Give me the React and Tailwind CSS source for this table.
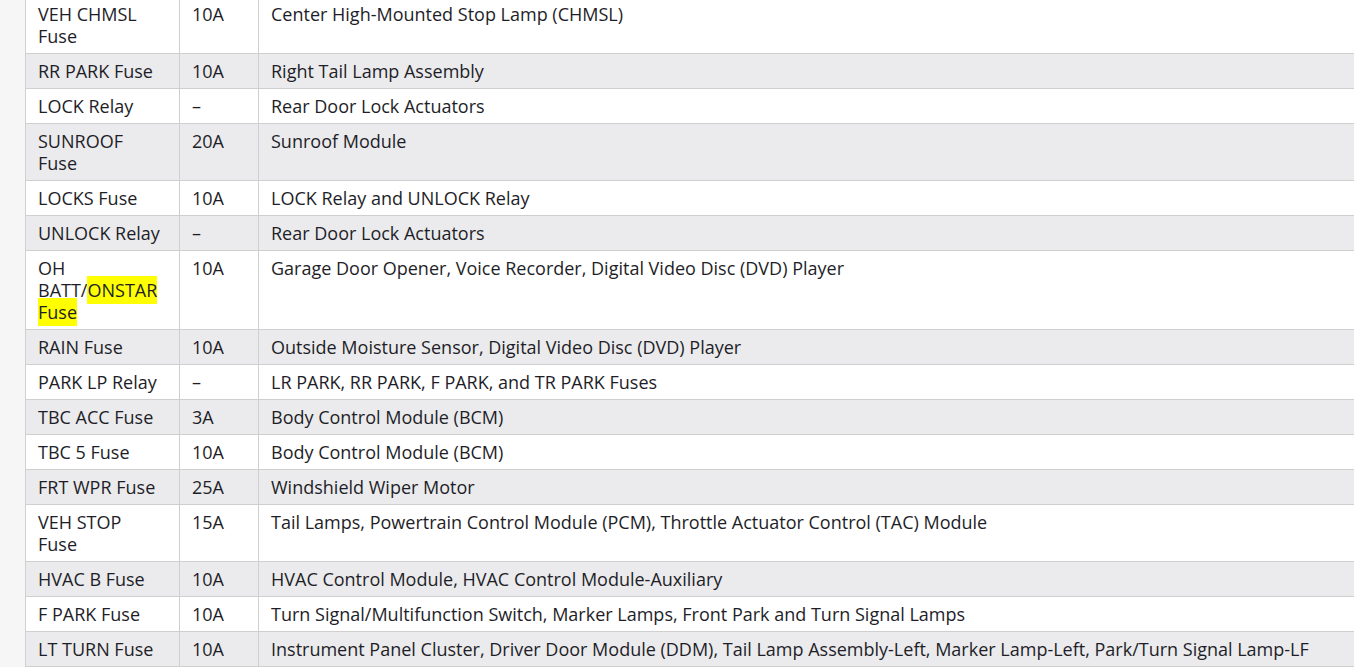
import React from "react";

const rows = [
  [["VEH CHMSL", "Fuse"], "10A", "Center High-Mounted Stop Lamp (CHMSL)"],
  [["RR PARK Fuse"], "10A", "Right Tail Lamp Assembly"],
  [["LOCK Relay"], "–", "Rear Door Lock Actuators"],
  [["SUNROOF", "Fuse"], "20A", "Sunroof Module"],
  [["LOCKS Fuse"], "10A", "LOCK Relay and UNLOCK Relay"],
  [["UNLOCK Relay"], "–", "Rear Door Lock Actuators"],
  ["ONSTAR", "10A", "Garage Door Opener, Voice Recorder, Digital Video Disc (DVD) Player"],
  [["RAIN Fuse"], "10A", "Outside Moisture Sensor, Digital Video Disc (DVD) Player"],
  [["PARK LP Relay"], "–", "LR PARK, RR PARK, F PARK, and TR PARK Fuses"],
  [["TBC ACC Fuse"], "3A", "Body Control Module (BCM)"],
  [["TBC 5 Fuse"], "10A", "Body Control Module (BCM)"],
  [["FRT WPR Fuse"], "25A", "Windshield Wiper Motor"],
  [["VEH STOP", "Fuse"], "15A", "Tail Lamps, Powertrain Control Module (PCM), Throttle Actuator Control (TAC) Module"],
  [["HVAC B Fuse"], "10A", "HVAC Control Module, HVAC Control Module-Auxiliary"],
  [["F PARK Fuse"], "10A", "Turn Signal/Multifunction Switch, Marker Lamps, Front Park and Turn Signal Lamps"],
  [["LT TURN Fuse"], "10A", "Instrument Panel Cluster, Driver Door Module (DDM), Tail Lamp Assembly-Left, Marker Lamp-Left, Park/Turn Signal Lamp-LF"],
];

export default function App() {
  return (
    <div className="w-[1354px] h-[667px] overflow-hidden flex bg-white" style={{ fontFamily: '"Open Sans", sans-serif' }}>
      <div className="w-[25px] shrink-0 bg-[#f6f6f6]" />
      <div className="flex-1 overflow-hidden">
        <table className="-mt-[4px] w-[1400px] border-collapse table-fixed text-[18px] leading-[22px] text-[#1e1e28]">
          <colgroup>
            <col className="w-[154px]" />
            <col className="w-[79px]" />
            <col />
          </colgroup>
          <tbody>
            {rows.map((r, i) => (
              <tr key={i} className={i % 2 === 1 ? "bg-[#ebebed]" : "bg-white"}>
                <td className="border border-[#cfcfcf] px-[12px] py-[6px] align-top whitespace-nowrap">
                  {r[0] === "ONSTAR" ? (
                    <>
                      OH
                      <br />
                      BATT/<mark className="bg-[#ffff00] text-[#1e1e28] py-[2px]">ONSTAR</mark>
                      <br />
                      <mark className="bg-[#ffff00] text-[#1e1e28] py-[2px]">Fuse</mark>
                    </>
                  ) : (
                    r[0].map((t, j) => (
                      <React.Fragment key={j}>
                        {j > 0 && <br />}
                        {t}
                      </React.Fragment>
                    ))
                  )}
                </td>
                <td className="border border-[#cfcfcf] px-[12px] py-[6px] align-top">{r[1]}</td>
                <td className="border border-[#cfcfcf] px-[12px] py-[6px] align-top whitespace-nowrap">{r[2]}</td>
              </tr>
            ))}
          </tbody>
        </table>
      </div>
    </div>
  );
}
